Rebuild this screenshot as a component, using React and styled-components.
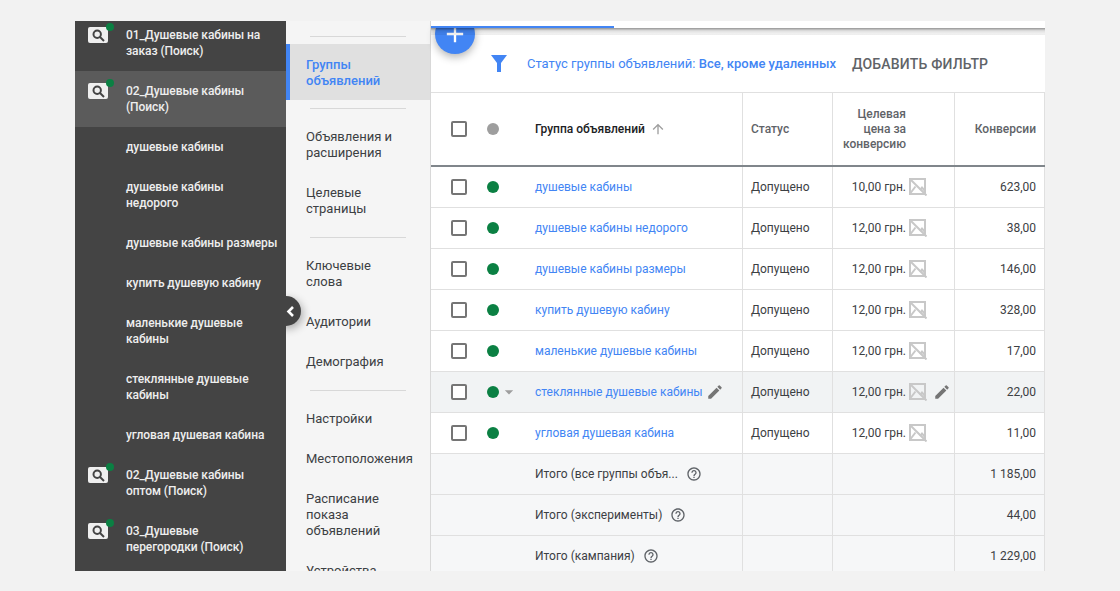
import React from "react";
import styled, { createGlobalStyle } from "styled-components";
import { MdEdit, MdHelpOutline, MdArrowUpward, MdArrowDropDown, MdAdd } from "react-icons/md";

const GlobalStyle = createGlobalStyle`
    html, body {
        margin: 0;
        padding: 0;
        background: #f2f2f2;
    }
    * {
        box-sizing: border-box;
    }
`;

const Page = styled.div`
    width: 1120px;
    height: 591px;
    padding: 21px 75px 20px;
    font-family: Roboto, "Liberation Sans", sans-serif;
    overflow: hidden;
`;

const Frame = styled.div`
    position: relative;
    display: flex;
    width: 970px;
    height: 550px;
    overflow: hidden;
`;

const Sidebar = styled.div`
    width: 211px;
    flex: none;
    background: #444444;
`;

const CampaignRow = styled.div`
    position: relative;
    display: flex;
    align-items: center;
    height: ${(p) => p.$h}px;
    padding: 0 4px ${(p) => p.$pb || 0}px 51px;
    font-size: 12px;
    font-weight: 500;
    line-height: 16px;
    letter-spacing: -0.06px;
    color: #eeeeee;
    background-color: ${(p) => (p.$active ? "#5b5b5b" : "transparent")};
    background-image: ${(p) => (p.$active ? "radial-gradient(#666666 0.5px, transparent 0.6px)" : "none")};
    background-size: 4px 4px;
`;

const SearchBadge = styled.div`
    position: absolute;
    left: 13px;
    top: ${(p) => p.$top}px;
    width: 20px;
    height: 16px;
    display: flex;
    align-items: center;
    justify-content: center;
    background: #efefef;
    border-radius: 2px;
`;

const BadgeDot = styled.span`
    position: absolute;
    right: -6px;
    top: -4px;
    width: 8px;
    height: 8px;
    border-radius: 50%;
    background: #0b8043;
`;

const Collapse = styled.div`
    position: absolute;
    left: 196px;
    top: 275px;
    width: 30px;
    height: 30px;
    display: flex;
    align-items: center;
    justify-content: flex-end;
    padding-right: 6px;
    background: #444444;
    border-radius: 50%;
    box-shadow: 2px 3px 8px rgba(0, 0, 0, 0.3);
    clip-path: inset(-12px -12px -12px 15px);
`;

const Nav = styled.div`
    width: 145px;
    flex: none;
    background: #f5f5f5;
    padding-top: 15px;
    overflow: hidden;
    border-right: 1px solid #d8d8d8;
`;

const NavLine = styled.div`
    height: 1px;
    margin: 0 24px 7px 24px;
    background: #d8d8d8;
`;

const NavItem = styled.div`
    display: flex;
    align-items: center;
    height: ${(p) => p.$h}px;
    padding: 2px 16px 0 ${(p) => (p.$active ? "16px" : "20px")};
    margin-bottom: ${(p) => p.$mb || 0}px;
    font-size: 13px;
    line-height: 16px;
    color: ${(p) => (p.$active ? "#4285f4" : "#3c4043")};
    font-weight: ${(p) => (p.$active ? 500 : 400)};
    background: ${(p) => (p.$active ? "#e0e0e0" : "transparent")};
    border-left: ${(p) => (p.$active ? "4px solid #4285f4" : "none")};
`;

const Main = styled.div`
    position: relative;
    flex: 1;
    background: #ffffff;
    min-width: 0;
`;

const TopStrip = styled.div`
    position: relative;
    z-index: 3;
    height: 7px;
    padding-top: 5px;
    background: #ffffff;
`;

const Progress = styled.div`
    width: 183px;
    height: 2px;
    background: #4285f4;
`;

const StripShadow = styled.div`
    position: relative;
    z-index: 3;
    height: 7px;
    background: linear-gradient(rgba(0, 0, 0, 0.42), rgba(0, 0, 0, 0.12) 40%, rgba(0, 0, 0, 0.05) 85%, rgba(0, 0, 0, 0.08));
`;

const Fab = styled.div`
    position: absolute;
    left: 4px;
    top: -21px;
    width: 40px;
    height: 40px;
    display: flex;
    align-items: center;
    justify-content: center;
    border-radius: 50%;
    background: #4285f4;
    color: #ffffff;
    font-size: 28px;
    box-shadow: 0 3px 8px rgba(0, 0, 0, 0.3);
    z-index: 2;
`;

const FilterBar = styled.div`
    position: relative;
    height: 58px;
    display: flex;
    align-items: center;
    padding-left: 60px;
    border-bottom: 1px solid #e0e0e0;
`;

const FilterText = styled.span`
    margin-left: 20px;
    font-size: 13px;
    color: #4285f4;
    white-space: nowrap;
    b {
        font-weight: 500;
    }
`;

const AddFilter = styled.span`
    margin-left: 16px;
    font-size: 14px;
    font-weight: 500;
    letter-spacing: 0.2px;
    color: #5f6368;
    white-space: nowrap;
`;

const Row = styled.div`
    display: grid;
    grid-template-columns: 312px 90px 122px 90px;
    height: ${(p) => p.$h || 41}px;
    border-bottom: ${(p) => (p.$head ? "2px solid #80868b" : "1px solid #e0e0e0")};
    background: ${(p) => p.$bg || "#ffffff"};
    font-size: 12px;
    color: #3c4043;
`;

const Cell = styled.div`
    display: flex;
    align-items: center;
    justify-content: ${(p) => (p.$right ? "flex-end" : "flex-start")};
    padding: 0 ${(p) => p.$pr || 8}px 0 ${(p) => p.$pl || 8}px;
    border-right: 1px solid #e0e0e0;
    min-width: 0;
`;

const Check = styled.span`
    width: 16px;
    height: 16px;
    flex: none;
    border: 2px solid #757575;
    border-radius: 2px;
    background: #ffffff;
`;

const Dot = styled.span`
    width: 12px;
    height: 12px;
    flex: none;
    margin-left: 20px;
    border-radius: 50%;
    background: ${(p) => p.$color};
`;

const DropSlot = styled.span`
    width: 36px;
    flex: none;
    display: flex;
    align-items: center;
    font-size: 20px;
    color: #9e9e9e;
`;

const Link = styled.span`
    color: #4285f4;
    white-space: nowrap;
`;

const HeadTitle = styled.span`
    font-weight: 500;
    color: #202124;
    white-space: nowrap;
`;

const HeadLabel = styled.span`
    font-weight: 500;
    color: #5f6368;
    text-align: right;
    line-height: 15px;
`;

const SortIcon = styled.span`
    display: flex;
    margin-left: 5px;
    font-size: 16px;
    color: #9e9e9e;
`;

const EditIcon = styled.span`
    display: flex;
    margin-left: ${(p) => p.$ml}px;
    font-size: 18px;
    color: #757575;
`;

const HelpIcon = styled.span`
    display: flex;
    margin-left: 8px;
    font-size: 16px;
    color: #5f6368;
`;

const Total = styled.span`
    color: #3c4043;
    white-space: nowrap;
`;

const NoImage = styled.svg`
    flex: none;
    width: 18px;
    height: 18px;
    margin-left: 3px;
    fill: none;
    stroke: #c8c8c8;
    stroke-width: 2;
`;

const NoImageIcon = () => (
    <NoImage viewBox="0 0 18 18">
        <rect x="1" y="1" width="15" height="15" />
        <path d="M1 1L17.5 17.5" />
        <path d="M1.5 15L6.5 8.5" />
        <path d="M11 12L13 9.5L16 13" />
    </NoImage>
);

const SearchIcon = () => (
    <svg width="13" height="13" viewBox="0 0 13 13" fill="none" stroke="#444444" strokeWidth="2">
        <circle cx="5.2" cy="5.2" r="3.7" />
        <path d="M8 8L12 12" />
    </svg>
);

const campaigns = [
    { id: 1, h: 50, pb: 6, badge: 6, text: <>01_Душевые кабины на<br />заказ (Поиск)</> },
    { id: 2, h: 56, badge: 12, active: true, text: <>02_Душевые кабины<br />(Поиск)</> },
    { id: 3, h: 40, text: "душевые кабины" },
    { id: 4, h: 56, text: <>душевые кабины<br />недорого</> },
    { id: 5, h: 40, text: "душевые кабины размеры" },
    { id: 6, h: 40, text: "купить душевую кабину" },
    { id: 7, h: 56, text: <>маленькие душевые<br />кабины</> },
    { id: 8, h: 56, text: <>стеклянные душевые<br />кабины</> },
    { id: 9, h: 40, text: "угловая душевая кабина" },
    { id: 10, h: 56, badge: 12, text: <>02_Душевые кабины<br />оптом (Поиск)</> },
    { id: 11, h: 56, badge: 12, text: <>03_Душевые<br />перегородки (Поиск)</> },
];

const rows = [
    ["душевые кабины", "10,00 грн.", "623,00"],
    ["душевые кабины недорого", "12,00 грн.", "38,00"],
    ["душевые кабины размеры", "12,00 грн.", "146,00"],
    ["купить душевую кабину", "12,00 грн.", "328,00"],
    ["маленькие душевые кабины", "12,00 грн.", "17,00"],
    ["стеклянные душевые кабины", "12,00 грн.", "22,00"],
    ["угловая душевая кабина", "12,00 грн.", "11,00"],
];

const totals = [
    ["Итого (все группы объя...", "1 185,00"],
    ["Итого (эксперименты)", "44,00"],
    ["Итого (кампания)", "1 229,00"],
];

const App = () => {
    return (
        <Page>
            <GlobalStyle />
            <Frame>
                <Sidebar>
                    {campaigns.map((c) => (
                        <CampaignRow key={c.id} $h={c.h} $pb={c.pb} $active={c.active}>
                            {c.badge !== undefined && (
                                <SearchBadge $top={c.badge}>
                                    <SearchIcon />
                                    <BadgeDot />
                                </SearchBadge>
                            )}
                            <span>{c.text}</span>
                        </CampaignRow>
                    ))}
                </Sidebar>
                <Collapse>
                    <svg width="9" height="11" viewBox="0 0 9 11">
                        <path d="M7 1L2.5 5.5L7 10" fill="none" stroke="#ffffff" strokeWidth="2.6" />
                    </svg>
                </Collapse>
                <Nav>
                    <NavLine />
                    <NavItem $h={56} $active $mb={8}>Группы<br />объявлений</NavItem>
                    <NavLine />
                    <NavItem $h={56}>Объявления и<br />расширения</NavItem>
                    <NavItem $h={56} $mb={9}>Целевые<br />страницы</NavItem>
                    <NavLine />
                    <NavItem $h={56}>Ключевые<br />слова</NavItem>
                    <NavItem $h={40}>Аудитории</NavItem>
                    <NavItem $h={40} $mb={9}>Демография</NavItem>
                    <NavLine />
                    <NavItem $h={40}>Настройки</NavItem>
                    <NavItem $h={40}>Местоположения</NavItem>
                    <NavItem $h={72}>Расписание<br />показа<br />объявлений</NavItem>
                    <NavItem $h={40}>Устройства</NavItem>
                </Nav>
                <Main>
                    <TopStrip>
                        <Progress />
                    </TopStrip>
                    <StripShadow />
                    <FilterBar>
                        <Fab><MdAdd /></Fab>
                        <svg width="16" height="17" viewBox="0 0 16 17">
                            <path d="M0 0H16L10 8V17H6V8Z" fill="#4285f4" />
                        </svg>
                        <FilterText>Статус группы объявлений: <b>Все, кроме удаленных</b></FilterText>
                        <AddFilter>ДОБАВИТЬ ФИЛЬТР</AddFilter>
                    </FilterBar>
                    <Row $h={74} $head>
                        <Cell $pl={20}>
                            <Check />
                            <Dot $color="#9e9e9e" />
                            <DropSlot />
                            <HeadTitle>Группа объявлений</HeadTitle>
                            <SortIcon><MdArrowUpward /></SortIcon>
                        </Cell>
                        <Cell><HeadLabel>Статус</HeadLabel></Cell>
                        <Cell $right $pr={48}><HeadLabel>Целевая<br />цена за<br />конверсию</HeadLabel></Cell>
                        <Cell $right $pr={8}><HeadLabel>Конверсии</HeadLabel></Cell>
                    </Row>
                    {rows.map((r, i) => {
                        const hover = i === 5;
                        return (
                            <Row key={r[0]} $bg={hover ? "#f1f3f4" : "#ffffff"}>
                                <Cell $pl={20}>
                                    <Check />
                                    <Dot $color="#0b8043" />
                                    <DropSlot>{hover && <MdArrowDropDown />}</DropSlot>
                                    <Link>{r[0]}</Link>
                                    {hover && <EditIcon $ml={3}><MdEdit /></EditIcon>}
                                </Cell>
                                <Cell>Допущено</Cell>
                                <Cell $right $pr={hover ? 3 : 27}>
                                    {r[1]}
                                    <NoImageIcon />
                                    {hover && <EditIcon $ml={6}><MdEdit /></EditIcon>}
                                </Cell>
                                <Cell $right>{r[2]}</Cell>
                            </Row>
                        );
                    })}
                    {totals.map((t) => (
                        <Row key={t[0]} $bg="#f6f7f8">
                            <Cell $pl={104}>
                                <Total>{t[0]}</Total>
                                <HelpIcon><MdHelpOutline /></HelpIcon>
                            </Cell>
                            <Cell />
                            <Cell />
                            <Cell $right>{t[1]}</Cell>
                        </Row>
                    ))}
                </Main>
            </Frame>
        </Page>
    );
};

export default App;
